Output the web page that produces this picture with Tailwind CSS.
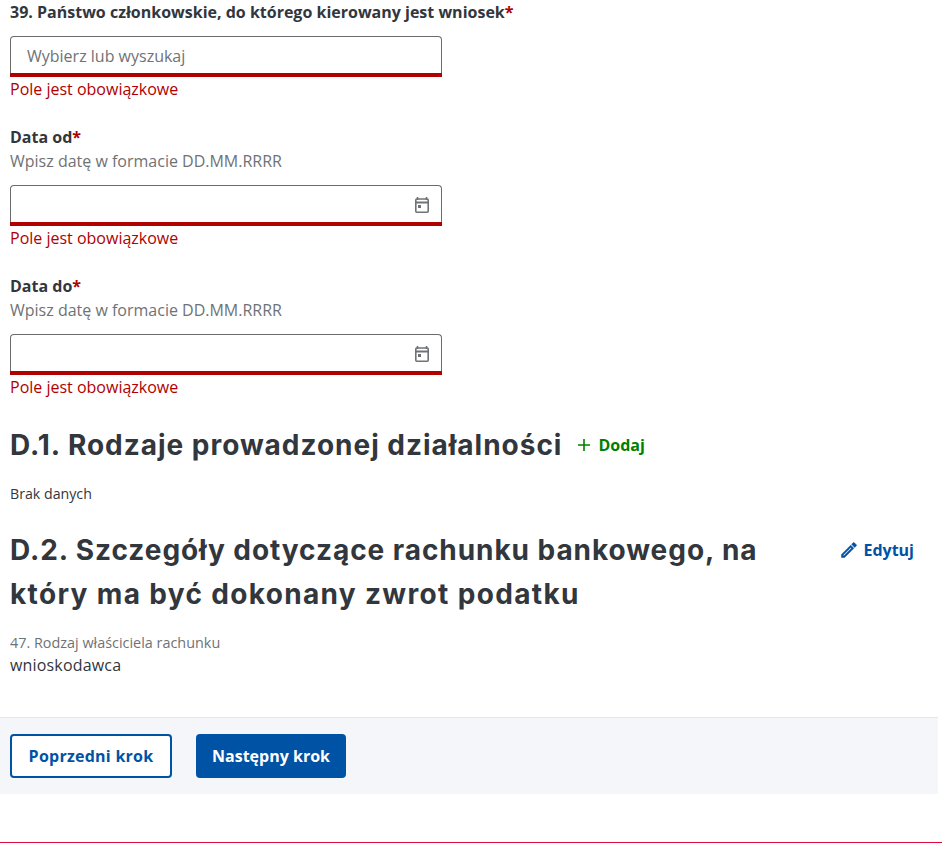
<!DOCTYPE html>
<html lang="pl">
<head>
<meta charset="utf-8">
<script src="https://cdn.jsdelivr.net/npm/@tailwindcss/browser@4"></script>
<title>Formularz</title>
</head>
<body class="bg-white font-['Open_Sans',sans-serif] text-[#32363d] h-[868px] w-[942px] overflow-hidden">
<main class="w-[938px]">
  <div class="px-[10px]">
    <div class="text-base leading-6 font-bold h-6">39. Państwo członkowskie, do którego kierowany jest wniosek<span class="text-[#b00000]">*</span></div>
    <div class="mt-3 w-[432px] h-[41px] rounded-t border border-[#6b6b6b] border-b-0 flex items-center pl-4 pb-[3px] text-base text-[#6f7275] relative">
      Wybierz lub wyszukaj
      <span class="absolute -left-px -right-px bottom-0 h-1 bg-[#b00000]"></span>
    </div>
    <div class="text-base leading-6 text-[#b00000]">Pole jest obowiązkowe</div>

    <div class="mt-6 text-base leading-6 font-bold">Data od<span class="text-[#b00000]">*</span></div>
    <div class="text-base leading-6 text-[#6f7275]">Wpisz datę w formacie DD.MM.RRRR</div>
    <div class="mt-3 w-[432px] h-[41px] rounded-t border border-[#6b6b6b] border-b-0 flex items-center justify-end pr-[9px] pb-[2px] relative">
      <svg class="w-5 h-5" viewBox="0 0 20 20" fill="none" stroke="#6f7275" stroke-width="1.600"><path d="M5.500 2v3M14.500 2v3"/><rect x="3.800" y="4" width="12.400" height="13.200" rx="1"/><path d="M3.800 7.500h12.400" stroke-width="2"/><rect x="6" y="10" width="3" height="3" fill="#6f7275" stroke="none"/></svg>
      <span class="absolute -left-px -right-px bottom-0 h-1 bg-[#b00000]"></span>
    </div>
    <div class="text-base leading-6 text-[#b00000]">Pole jest obowiązkowe</div>

    <div class="mt-6 text-base leading-6 font-bold">Data do<span class="text-[#b00000]">*</span></div>
    <div class="text-base leading-6 text-[#6f7275]">Wpisz datę w formacie DD.MM.RRRR</div>
    <div class="mt-3 w-[432px] h-[41px] rounded-t border border-[#6b6b6b] border-b-0 flex items-center justify-end pr-[9px] pb-[2px] relative">
      <svg class="w-5 h-5" viewBox="0 0 20 20" fill="none" stroke="#6f7275" stroke-width="1.600"><path d="M5.500 2v3M14.500 2v3"/><rect x="3.800" y="4" width="12.400" height="13.200" rx="1"/><path d="M3.800 7.500h12.400" stroke-width="2"/><rect x="6" y="10" width="3" height="3" fill="#6f7275" stroke="none"/></svg>
      <span class="absolute -left-px -right-px bottom-0 h-1 bg-[#b00000]"></span>
    </div>
    <div class="text-base leading-6 text-[#b00000]">Pole jest obowiązkowe</div>

    <div class="mt-6 flex items-center h-11">
      <h2 class="font-['Inter',sans-serif] font-bold text-[28px] leading-[44px] text-[#32363d] tracking-[0.98px]">D.1. Rodzaje prowadzonej działalności</h2>
      <span class="ml-[15px] flex items-center text-base font-bold text-[#008000]">
        <svg class="w-[14px] h-[14px] mr-[7px]" viewBox="0 0 14 14" fill="none" stroke="#008000" stroke-width="1.600"><path d="M7 1v12M1 7h12"/></svg>Dodaj
      </span>
    </div>
    <div class="mt-[17px] text-[14.200px] leading-5 text-[#32363d]">Brak danych</div>

    <div class="mt-6 flex justify-between items-start">
      <h2 class="font-['Inter',sans-serif] font-bold text-[28px] leading-[44px] text-[#32363d] w-[790px]"><span class="tracking-[0.94px]">D.2. Szczegóły dotyczące rachunku bankowego, na</span> <span class="tracking-[1.340px]">który ma być dokonany zwrot podatku</span></h2>
      <span class="mt-[10px] mr-[14px] h-6 flex items-center text-base font-bold text-[#0052a5]">
        <svg class="w-5 h-5 mr-1" viewBox="0 0 24 24" fill="#0052a5" stroke="#0052a5" stroke-width="0.600"><path d="M3 17.250V21h3.750L17.810 9.940l-3.750-3.750L3 17.250zM5.920 19H5v-.920l9.060-9.060.920.920L5.920 19zM20.710 7.040a1 1 0 0 0 0-1.410l-2.340-2.340a1 1 0 0 0-1.410 0l-1.830 1.830 3.750 3.750 1.830-1.830z"/></svg>Edytuj
      </span>
    </div>
    <div class="mt-[17px] text-[14.400px] leading-5 text-[#6f7275]">47. Rodzaj właściciela rachunku</div>
    <div class="text-base leading-6 tracking-[0.17px] text-[#32363d]">wnioskodawca</div>
  </div>

  <div class="mt-10 h-[77px] bg-[#f4f6fa] border-t border-[#e4e6e8] flex items-start pt-4 pl-[10px] gap-6">
    <button class="w-[162px] h-11 rounded border-2 border-[#0052a5] bg-white text-[#0052a5] font-bold text-base tracking-[0.25px]">Poprzedni krok</button>
    <button class="w-[150px] h-11 rounded bg-[#0052a5] text-white font-bold text-base">Następny krok</button>
  </div>
</main>
<div class="mt-12 w-[942px] h-px bg-[#dc0a3c]"></div>
</body>
</html>
